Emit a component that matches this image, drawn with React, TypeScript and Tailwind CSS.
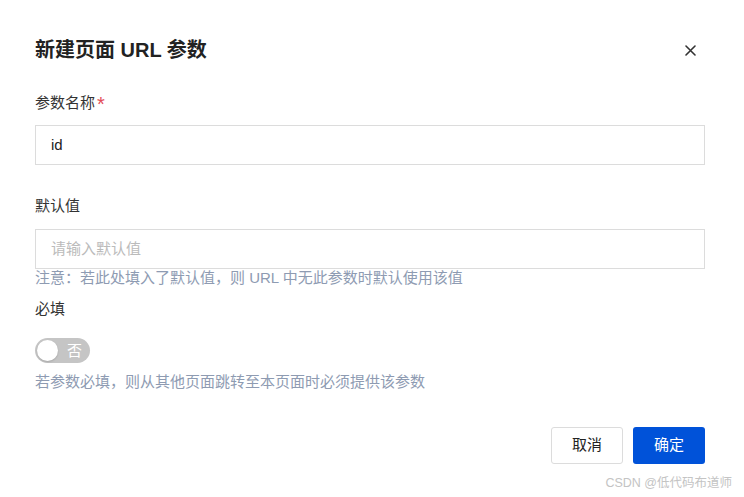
import { useState } from "react";

export default function App() {
  const [required, setRequired] = useState(false);

  return (
    <div className="relative w-[744px] h-[497px] bg-white font-['Liberation_Sans','Noto_Sans_CJK_SC',sans-serif] text-[#333]">
      <div className="pl-[35px] pr-[39px] pt-[36px]">
        {/* Header */}
        <div className="flex items-center justify-between h-[28px]">
          <h2 className="text-[20px] leading-[28px] font-bold text-[#222]">新建页面 URL 参数</h2>
          <button className="w-[20px] h-[20px] mr-[5px] flex items-center justify-center text-[#333]">
            <svg width="11" height="11" viewBox="0 0 11 11" fill="none">
              <path d="M1 1L10 10M10 1L1 10" stroke="currentColor" strokeWidth="1.6" strokeLinecap="round" />
            </svg>
          </button>
        </div>

        {/* Param name */}
        <div className="mt-[27px] h-[22px] text-[15px] leading-[22px]">
          参数名称
          <span className="relative top-[3px] ml-[2px] text-[#e34d59] text-[20px] leading-none">*</span>
        </div>
        <div className="mt-[12px] h-[40px] border border-[#dcdcdc] flex items-center px-[15px] text-[15px] text-[#222]">
          id
        </div>

        {/* Default value */}
        <div className="mt-[30px] text-[15px] leading-[22px]">默认值</div>
        <div className="mt-[12px] h-[40px] border border-[#dcdcdc] flex items-center px-[15px] text-[15px] text-[#bbbbbb]">
          请输入默认值
        </div>
        <div className="text-[15px] leading-[18px] text-[#8e9bb2]">
          注意：若此处填入了默认值，则 URL 中无此参数时默认使用该值
        </div>

        {/* Required */}
        <div className="mt-[11px] text-[15px] leading-[22px]">必填</div>
        <button
          onClick={() => setRequired(!required)}
          className="mt-[18px] w-[55px] h-[25px] rounded-full bg-[#c5c5c5] flex items-center pl-[2px] pr-[8px] justify-between"
        >
          <span className="w-[21px] h-[21px] rounded-full bg-white shadow-[0_1px_2px_rgba(0,0,0,0.15)]" />
          <span className="text-white text-[15px] leading-[20px]">否</span>
        </button>
        <div className="mt-[9px] text-[15px] leading-[20px] text-[#8e9bb2]">
          若参数必填，则从其他页面跳转至本页面时必须提供该参数
        </div>

        {/* Footer */}
        <div className="mt-[35px] flex justify-end gap-[10px]">
          <button className="w-[72px] h-[37px] rounded-[3px] border border-[#dcdcdc] bg-white text-[15px] text-[#222]">
            取消
          </button>
          <button className="w-[72px] h-[37px] rounded-[3px] bg-[#0052d9] text-[15px] text-white">
            确定
          </button>
        </div>
      </div>

      <div className="absolute right-[12px] bottom-[6px] text-[12.5px] leading-[16px] text-[#c4c4c4]">
        CSDN @低代码布道师
      </div>
    </div>
  );
}
